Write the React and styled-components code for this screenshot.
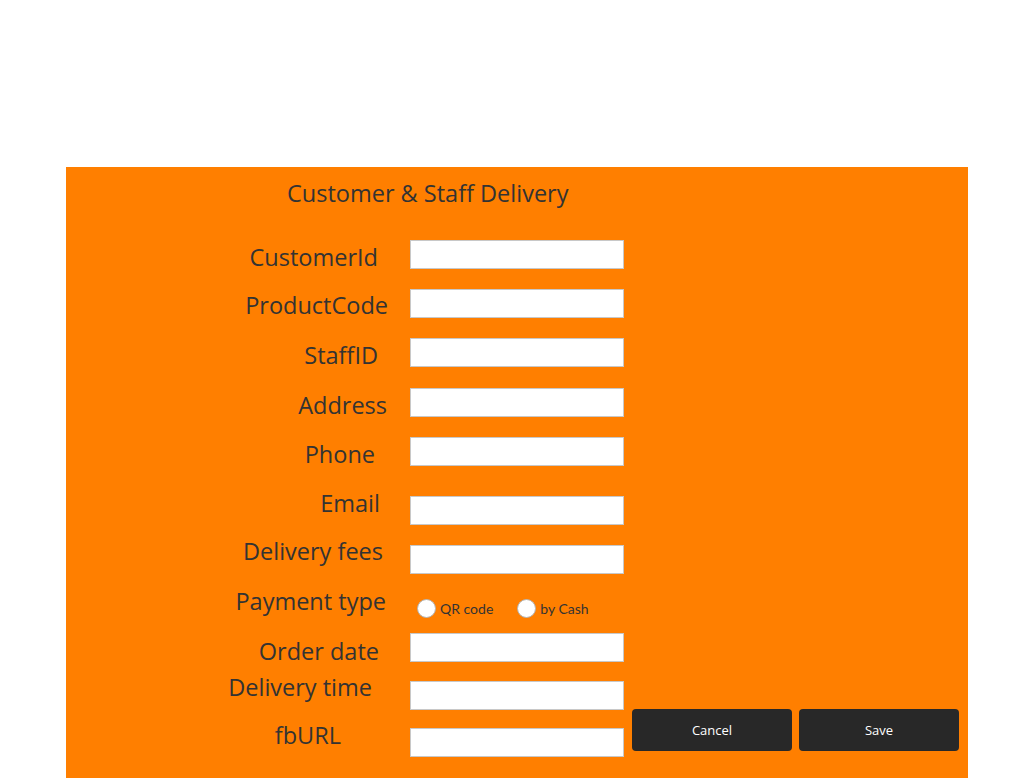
import React from "react";
import styled, { createGlobalStyle } from "styled-components";

const GlobalStyle = createGlobalStyle`
  body {
    margin: 0;
    background: #ffffff;
    font-family: "Open Sans", sans-serif;
  }
`;

const Page = styled.div`
  padding: 167px 0 0 66px;
`;

const Panel = styled.div`
  display: flex;
  width: 902px;
  height: 611px;
  background: #ff7f00;
  color: #333333;
`;

const Form = styled.div`
  display: flex;
  flex-direction: column;
  width: 558px;
  padding-top: 14px;
`;

const Title = styled.h1`
  margin: 0 0 35px 221px;
  font-size: 23.5px;
  line-height: 24px;
  font-weight: 400;
  white-space: nowrap;
`;

const Row = styled.div`
  display: grid;
  grid-template-columns: 344px 214px;
  align-items: start;
  height: ${(p) => p.$h}px;
`;

const Label = styled.label`
  text-align: right;
  font-size: 23.5px;
  line-height: 24px;
  white-space: nowrap;
  padding-right: ${(p) => p.$pr}px;
  margin-top: ${(p) => p.$dy}px;
`;

const Input = styled.input`
  box-sizing: border-box;
  width: 214px;
  height: 29px;
  margin: 0;
  border: 1px solid #c8c8c8;
  background: #ffffff;
  outline: none;
`;

const Radios = styled.div`
  display: flex;
  align-items: center;
  gap: 24px;
  margin: 9px 0 0 7px;
`;

const RadioOption = styled.label`
  display: flex;
  align-items: center;
  gap: 4px;
  font-family: "Comic Sans MS", "Lato", sans-serif;
  font-size: 14px;
  color: #333333;
`;

const Circle = styled.span`
  box-sizing: border-box;
  width: 19px;
  height: 19px;
  border-radius: 50%;
  background: #ffffff;
  border: 1px solid #b4b4b4;
`;

const Actions = styled.div`
  display: flex;
  gap: 7px;
  align-self: flex-end;
  margin: 0 0 27px 8px;
`;

const Button = styled.button`
  width: 160px;
  height: 42px;
  border: none;
  border-radius: 4px;
  background: #282828;
  color: #ffffff;
  font-family: "Open Sans", sans-serif;
  font-size: 13px;
  cursor: pointer;
`;

const fields = [
  { label: "CustomerId", h: 49, pr: 32, dy: 5 },
  { label: "ProductCode", h: 49, pr: 22, dy: 4 },
  { label: "StaffID", h: 50, pr: 32, dy: 5 },
  { label: "Address", h: 49, pr: 23, dy: 5 },
  { label: "Phone", h: 59, pr: 35, dy: 5 },
  { label: "Email", h: 49, pr: 30, dy: -5 },
  { label: "Delivery fees", h: 45, pr: 27, dy: -6 },
  { label: "Payment type", h: 43, pr: 24, dy: -1, radio: true },
  { label: "Order date", h: 48, pr: 31, dy: 6 },
  { label: "Delivery time", h: 47, pr: 38, dy: -6 },
  { label: "fbURL", h: 29, pr: 69, dy: -5 },
];

export default function App() {
  return (
    <Page>
      <GlobalStyle />
      <Panel>
        <Form>
          <Title>Customer &amp; Staff Delivery</Title>
          {fields.map((f) => (
            <Row key={f.label} $h={f.h}>
              <Label $pr={f.pr} $dy={f.dy}>
                {f.label}
              </Label>
              {f.radio ? (
                <Radios>
                  <RadioOption>
                    <Circle />
                    QR code
                  </RadioOption>
                  <RadioOption>
                    <Circle />
                    by Cash
                  </RadioOption>
                </Radios>
              ) : (
                <Input type="text" />
              )}
            </Row>
          ))}
        </Form>
        <Actions>
          <Button>Cancel</Button>
          <Button>Save</Button>
        </Actions>
      </Panel>
    </Page>
  );
}
